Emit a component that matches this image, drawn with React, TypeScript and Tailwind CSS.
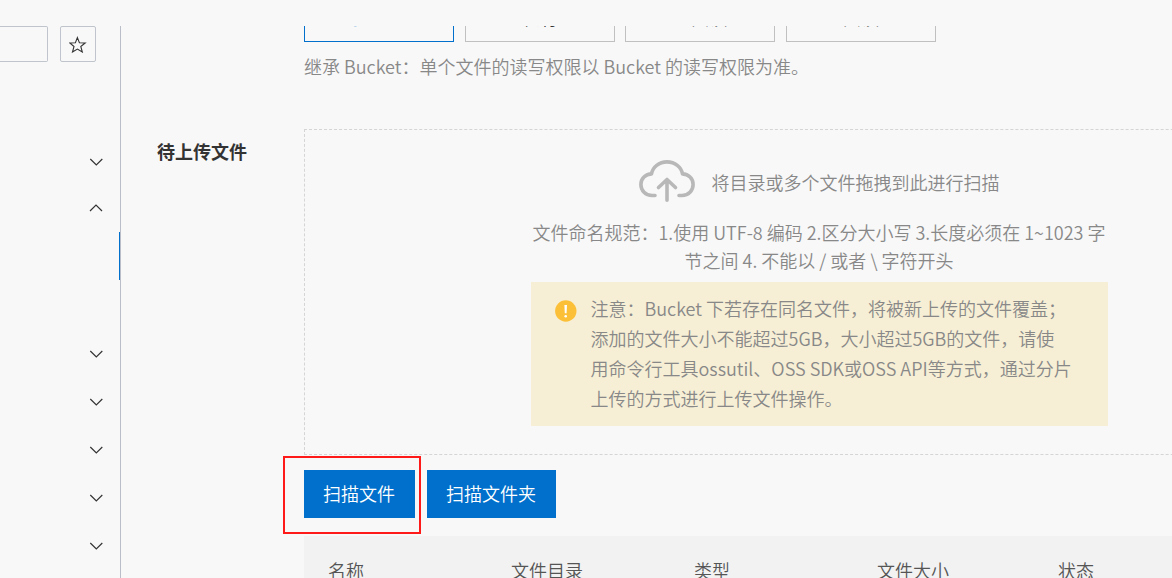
import { useState } from 'react';
import clsx from 'clsx';

type MenuItem = {
  id: string;
  state: 'closed' | 'open' | 'active' | 'plain';
};

const menuItems: MenuItem[] = [
  { id: 'm1', state: 'closed' },
  { id: 'm2', state: 'open' },
  { id: 'm3', state: 'active' },
  { id: 'm4', state: 'plain' },
  { id: 'm5', state: 'closed' },
  { id: 'm6', state: 'closed' },
  { id: 'm7', state: 'closed' },
  { id: 'm8', state: 'closed' },
  { id: 'm9', state: 'closed' },
];

const aclOptions = ['继承 Bucket', '私有', '公共读', '公共读写'];

function Chevron({ up }: { up: boolean }) {
  return (
    <svg viewBox="0 0 16 16" className="size-4" fill="none" stroke="#333" strokeWidth="1.2">
      <path d={up ? 'M2 11 L8 5 L14 11' : 'M2.3 7 L8.3 13 L14.3 7'} />
    </svg>
  );
}

function Sidebar() {
  return (
    <aside className="w-[121px] shrink-0 border-r border-[#b9bec8]">
      <div className="flex gap-3">
        <input
          aria-label="Bucket"
          className="h-9 w-12 rounded-r-xs border border-l-0 border-[#c0c4cc] bg-transparent px-2 outline-none"
        />
        <button
          type="button"
          aria-label="收藏"
          className="flex size-9 items-center justify-center rounded-xs border border-[#c0c4cc]"
        >
          <svg viewBox="0 0 18 18" className="size-[18px]" fill="none" stroke="#333" strokeWidth="1.1">
            <path d="M8.4 2.6 L10.4 7.8 L16.2 8 L11.8 11.5 L13.3 17 L8.4 14.1 L3.5 17 L5 11.5 L0.8 8 L6.4 7.8 Z" />
          </svg>
        </button>
      </div>

      <ul className="mt-[74px]">
        {menuItems.map((item) => (
          <li
            key={item.id}
            className={clsx(
              'flex h-12 items-center justify-end border-r pr-[15px]',
              item.state === 'active' ? 'border-[#0070cc]' : 'border-transparent',
            )}
          >
            {(item.state === 'closed' || item.state === 'open') && (
              <button type="button" aria-label="展开">
                <Chevron up={item.state === 'open'} />
              </button>
            )}
          </li>
        ))}
      </ul>
    </aside>
  );
}

function AclPicker() {
  const [acl, setAcl] = useState(aclOptions[0]);

  return (
    <div>
      <div className="flex w-[632px] justify-between">
        {aclOptions.map((option) => (
          <label
            key={option}
            className={clsx(
              'flex h-12 w-[150px] items-center justify-center border pb-0.5',
              acl === option ? 'border-[#0070cc] text-[#0070cc]' : 'border-[#c0c0c0] text-[#333]',
            )}
          >
            <input
              type="radio"
              name="acl"
              className="sr-only"
              checked={acl === option}
              onChange={() => setAcl(option)}
            />
            {option}
          </label>
        ))}
      </div>
      <p className="mt-2.5 leading-7">继承 Bucket：单个文件的读写权限以 Bucket 的读写权限为准。</p>
    </div>
  );
}

function DropZone() {
  return (
    <div className="flex h-[326px] flex-col items-center border border-dashed border-[#d5d5d5] pt-[30px]">
      <div className="flex items-center gap-[17px]">
        <svg
          viewBox="0 0 56 42"
          className="h-[42px] w-14"
          fill="none"
          stroke="#b8b8b8"
          strokeWidth="3.6"
          strokeLinecap="round"
          strokeLinejoin="round"
        >
          <path d="M16 35.5 H13 C6.5 35.5 1.9 30.5 1.9 24.5 C1.9 18.5 6.5 14.2 12.5 13.9 C13.7 7 20 1.9 28 1.9 C36 1.9 42.3 7 43.5 13.9 C49.5 14.2 54.1 18.5 54.1 24.5 C54.1 30.5 49.5 35.5 43 35.5 H40" />
          <path d="M28 40.2 V20 M19.5 27.5 L28 19.5 L36.5 27.5" />
        </svg>
        <span className="pt-0.5">将目录或多个文件拖拽到此进行扫描</span>
      </div>

      <p className="mt-4 text-center leading-7">
        文件命名规范：1.使用 UTF-8 编码 2.区分大小写 3.长度必须在 1~1023 字
        <br />
        节之间 4. 不能以 / 或者 \ 字符开头
      </p>

      <div className="mt-2 flex w-[577px] gap-[14px] bg-[#f7efd5] pt-[11px] pb-[13px] pl-6">
        <svg viewBox="0 0 22 22" className="mt-[7px] size-[22px] shrink-0">
          <circle cx="10.8" cy="11" r="10.7" fill="#fcbf38" />
          <path d="M9.4 5 H12 L11.6 13.2 H9.8 Z" fill="#fff" />
          <circle cx="10.7" cy="16.2" r="1.3" fill="#fff" />
        </svg>
        <p className="leading-[30px]">
          注意：Bucket 下若存在同名文件，将被新上传的文件覆盖；
          <br />
          添加的文件大小不能超过5GB，大小超过5GB的文件，请使
          <br />
          用命令行工具ossutil、OSS SDK或OSS API等方式，通过分片
          <br />
          上传的方式进行上传文件操作。
        </p>
      </div>
    </div>
  );
}

function FileTable() {
  return (
    <table className="mt-[18px] w-full table-fixed bg-[#f2f2f2] text-left text-[#555]">
      <thead>
        <tr className="h-[68px]">
          <th className="w-[183px] pl-6 font-[350]">名称</th>
          <th className="w-[183px] pl-6 font-[350]">文件目录</th>
          <th className="w-[183px] pl-6 font-[350]">类型</th>
          <th className="w-[181px] pl-6 font-[350]">文件大小</th>
          <th className="pl-6 font-[350]">状态</th>
        </tr>
      </thead>
    </table>
  );
}

export default function App() {
  return (
    <div className="flex h-screen overflow-hidden bg-[#f8f8f8] pt-[26px] font-['Noto_Sans_CJK_SC',sans-serif] text-lg font-[350] text-[#888]">
      <Sidebar />

      <main className="min-w-0 flex-1 overflow-hidden">
        <div className="-mt-8 grid min-w-[1213px] grid-cols-[147px_1fr] gap-y-[49px] pl-9">
          <div className="col-start-2">
            <AclPicker />
          </div>

          <h2 className="mt-2 font-bold text-[#333]">待上传文件</h2>
          <div>
            <DropZone />
            <div className="mt-[15px] flex gap-3 text-white">
              <div className="relative">
                <button type="button" className="h-12 bg-[#0070cc] pr-5 pb-0.5 pl-[19px]">
                  扫描文件
                </button>
                <div className="pointer-events-none absolute -top-[14px] -right-[6px] -bottom-[16px] -left-[21px] border-2 border-[#ff1a1a]" />
              </div>
              <button type="button" className="h-12 bg-[#0070cc] pr-5 pb-0.5 pl-[19px]">
                扫描文件夹
              </button>
            </div>
            <FileTable />
          </div>
        </div>
      </main>
    </div>
  );
}
